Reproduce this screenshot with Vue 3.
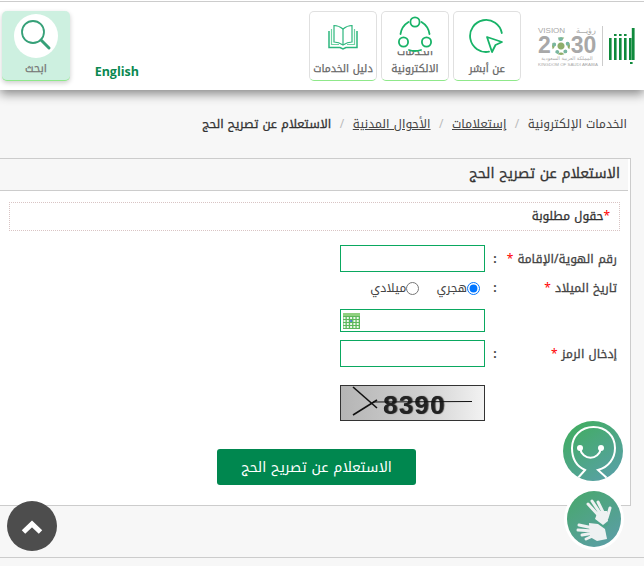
<template>
  <div class="page" dir="rtl">
    <header class="top">
      <div class="logos">
        <svg class="absher" width="30" height="42" viewBox="0 0 30 42">
          <g fill="#0f8a3c">
            <rect x="2" y="13" width="2.6" height="22" />
            <rect x="7" y="13" width="2.6" height="22" />
            <rect x="12" y="13" width="2.6" height="22" />
            <rect x="17" y="13" width="2.6" height="22" />
            <rect x="22" y="13" width="2.6" height="22" />
            <rect x="24.8" y="3" width="2.8" height="32" />
            <rect x="7" y="9" width="2.6" height="2" />
            <rect x="12" y="9" width="2.6" height="2" />
            <rect x="17" y="9" width="2.6" height="2" />
            <rect x="23" y="37" width="2.6" height="2" />
          </g>
        </svg>
        <div class="logo-sep"></div>
        <div class="vision">
          <div class="vision-top"><span>رؤيـــة</span><span dir="ltr">VISION</span></div>
          <div class="vision-year" dir="ltr">2<span class="emblem"></span>30</div>
          <div class="vision-ar">المملكة العربية السعودية</div>
          <div class="vision-en" dir="ltr">KINGDOM OF SAUDI ARABIA</div>
        </div>
      </div>

      <nav class="cards">
        <a class="card">
          <svg class="icon" width="36" height="36" viewBox="0 0 36 36" fill="none" stroke="#18b368" stroke-width="1.8">
            <path d="M20 33.7 A16 16 0 1 1 32.8 15" stroke-linecap="round" />
            <path d="M18 19 L33 24 L26.5 27 L23 34 Z" stroke-linejoin="round" />
          </svg>
          <span>عن أبشر</span>
        </a>
        <a class="card">
          <div class="card-clip">
            <svg width="36" height="40" viewBox="0 0 36 40" fill="none" stroke="#18b368" stroke-width="1.8">
              <circle cx="18" cy="8" r="4.6" />
              <circle cx="6.5" cy="28" r="4.6" />
              <circle cx="29.5" cy="28" r="4.6" />
              <path d="M11.5 8 A17 17 0 0 0 3.5 20" stroke-linecap="round" />
              <path d="M24.5 8 A17 17 0 0 1 32.5 20" stroke-linecap="round" />
              <path d="M12 36 Q18 38 24 36" stroke-linecap="round" />
            </svg>
          </div>
          <span class="two-line">الخدمات الالكترونية</span>
        </a>
        <a class="card">
          <svg class="icon book" width="30" height="26" viewBox="0 0 30 26" fill="none" stroke="#2cb67d" stroke-width="1.2">
            <path d="M15 5 C12 2.5 9 1.5 6 1.5 V18 C9 18 12 19 15 21 C18 19 21 18 24 18 V1.5 C21 1.5 18 2.5 15 5 Z" />
            <path d="M15 5 V21" />
            <path d="M3.5 5 V20.5 H11" stroke="#6fd3a3" />
            <path d="M26.5 5 V20.5 H19" stroke="#6fd3a3" />
            <path d="M1 7 V23.5 H12 L15 25 L18 23.5 H29 V7" stroke-width="1.5" />
          </svg>
          <span>دليل الخدمات</span>
        </a>
      </nav>

      <a class="lang">English</a>

      <a class="search-card">
        <div class="search-circle">
          <svg width="44" height="44" viewBox="0 0 44 44" fill="none" stroke="#36a078">
            <circle cx="19" cy="18" r="11" stroke-width="1.8" />
            <path d="M27 26 L35 34" stroke-width="3" stroke-linecap="round" />
          </svg>
        </div>
        <span>ابحث</span>
      </a>
    </header>

    <div class="crumbs">
      <span>الخدمات الإلكترونية</span>
      <i>/</i>
      <a>إستعلامات</a>
      <i>/</i>
      <a>الأحوال المدنية</a>
      <i>/</i>
      <b>الاستعلام عن تصريح الحج</b>
    </div>

    <section class="panel">
      <h2 class="panel-title">الاستعلام عن تصريح الحج</h2>
      <div class="required"><em>*</em>حقول مطلوبة</div>

      <form class="form" @submit.prevent>
        <div class="row row-id">
          <label>رقم الهوية/الإقامة <em>*</em></label>
          <span class="colon">:</span>
          <input class="field" type="text" />
        </div>

        <div class="row row-radio">
          <label>تاريخ الميلاد <em>*</em></label>
          <span class="colon">:</span>
          <div class="radios">
            <label class="radio"><input type="radio" name="cal" checked />هجري</label>
            <label class="radio"><input type="radio" name="cal" />ميلادي</label>
          </div>
        </div>

        <div class="row row-date">
          <span></span>
          <span></span>
          <div class="field date-field">
            <svg width="17" height="16" viewBox="0 0 17 16">
              <rect width="17" height="16" fill="#5cb85c" />
              <rect x="0" y="0" width="17" height="3" fill="#8fd07f" />
              <g fill="#eef8ea">
                <rect v-for="c in cells" :key="c.k" :x="c.x" :y="c.y" width="2" height="2" />
              </g>
              <rect x="7.1" y="7" width="2" height="2" fill="#4a7fd0" />
            </svg>
          </div>
        </div>

        <div class="row row-code">
          <label>إدخال الرمز <em>*</em></label>
          <span class="colon">:</span>
          <input class="field" type="text" />
        </div>

        <div class="row row-captcha">
          <span></span>
          <span></span>
          <div class="captcha">
            <span class="captcha-text" dir="ltr">8390</span>
            <svg class="captcha-lines" width="143" height="34" viewBox="0 0 143 34" fill="none" stroke="#111">
              <path d="M12 1 L36 22" stroke-width="1.6" />
              <path d="M12 29 L36 14" stroke-width="1.6" />
              <path d="M32 16 L131 15.5" stroke-width="1" />
            </svg>
          </div>
        </div>

        <button class="submit" type="button">الاستعلام عن تصريح الحج</button>
      </form>
    </section>

    <div class="strip"></div>

    <a class="to-top">
      <svg width="24" height="16" viewBox="0 0 24 16" fill="none" stroke="#fff" stroke-width="5">
        <path d="M3.5 14 L12 6 L20.5 14" />
      </svg>
    </a>

    <a class="float-chat">
      <svg width="60" height="60" viewBox="0 0 60 60" fill="none" stroke="#fff" stroke-width="2">
        <path d="M14 58 L22 49 C13 45 9 37 9 27 C9 15 18 6 30.5 6 C43 6 52 15 52 27 C52 37 46 46 35 49 L45 58" />
        <path d="M17 27 C19 40 36 40 38 27" />
        <circle cx="17" cy="27" r="3" fill="#fff" stroke="none" />
        <circle cx="38" cy="27" r="3" fill="#fff" stroke="none" />
      </svg>
    </a>

    <a class="float-sign">
      <svg width="54" height="56" viewBox="0 0 54 56" fill="none" stroke="#eef1f2" stroke-width="3" stroke-linecap="round">
        <path d="M33 26 L21 13 M35 25 L25 10 M38 25 L31 11 M40 27 L43 17" />
        <path d="M31 20 L40 20 L41 30 L36 34 L28 28 Z" fill="#eef1f2" stroke="none" />
        <path d="M24 26 L36 36 L41 33" stroke="#4ea58a" stroke-width="1.5" />
        <path d="M26 37 L12 34 M26 40 L11 39 M27 42 L15 44 M28 44 L19 48" />
        <path d="M22 32 L31 33 L38 38 L40 48 L30 50 L23 46 Z" fill="#eef1f2" stroke="none" />
      </svg>
    </a>
  </div>
</template>

<script setup>
const cells = []
for (let r = 0; r < 4; r++) {
  for (let c = 0; c < 5; c++) {
    cells.push({ k: r + '-' + c, x: 0.5 + c * 3.3, y: 4 + r * 3 })
  }
}
</script>

<style>
html,
body {
  background: #fff;
}
</style>

<style scoped>
.page {
  position: relative;
  width: 644px;
  height: 566px;
  overflow: hidden;
  background: #f7f7f7;
  font-family: "Noto Kufi Arabic", "DejaVu Sans", sans-serif;
  color: #333;
  border-top: 1px solid #fff;
  box-sizing: border-box;
}

.top {
  display: flex;
  align-items: flex-start;
  height: 88px;
  background: #fff;
  border-top: 1px solid #ccc;
  box-shadow: 0 4px 10px rgba(0, 0, 0, 0.45);
}

.logos {
  display: flex;
  align-items: center;
  height: 42px;
  margin: 23px 7px 0 17px;
}

.absher {
  flex: none;
}

.logo-sep {
  width: 1px;
  height: 40px;
  margin: 0 4px 0 6px;
  background: #ccc;
}

.vision {
  width: 58px;
  color: #a8a8a8;
  text-align: center;
  line-height: 1;
}

.vision-top {
  display: flex;
  justify-content: space-between;
  font-size: 8px;
  line-height: 9px;
  height: 9px;
  font-family: "Liberation Sans", sans-serif;
}

.vision-year {
  font-size: 23px;
  line-height: 20px;
  height: 20px;
  font-weight: 700;
  white-space: nowrap;
  font-family: "Liberation Sans", sans-serif;
}

.emblem {
  display: inline-block;
  width: 18px;
  height: 18px;
  margin: 0 1px;
  vertical-align: -2px;
  border-radius: 50%;
  border: 4px dotted #79b7a0;
  background: radial-gradient(circle, #8fae6a 0 3px, #fff 4px);
  box-sizing: border-box;
}

.vision-ar {
  font-size: 5px;
  line-height: 7px;
  height: 7px;
  font-family: "DejaVu Sans", sans-serif;
}

.vision-en {
  font-size: 4.4px;
  line-height: 5px;
  white-space: nowrap;
  font-family: "Liberation Sans", sans-serif;
}

.cards {
  display: flex;
  gap: 4px;
  margin-top: 9px;
}

.card {
  width: 68px;
  height: 70px;
  box-sizing: border-box;
  background: #fff;
  border: 1px solid #e0e0e0;
  border-bottom: 1px solid #8fe88a;
  border-radius: 5px;
  display: flex;
  flex-direction: column;
  align-items: center;
  justify-content: flex-end;
  position: relative;
  padding-bottom: 3px;
  font-size: 10.5px;
  line-height: 17px;
  color: #666;
  -webkit-text-stroke: 0.25px #666;
  white-space: nowrap;
}

.icon {
  position: absolute;
  top: 6px;
  left: 15px;
}

.book {
  top: 12px;
  left: 18px;
}

.card-clip {
  position: absolute;
  top: 0;
  left: 0;
  width: 100%;
  height: 39px;
  display: flex;
  justify-content: center;
  align-items: flex-start;
  background: #fff;
  border-radius: 5px;
  padding-top: 2px;
  box-sizing: border-box;
  z-index: 1;
}

.card-clip svg {
  overflow: visible;
}

.two-line {
  width: 66px;
  white-space: normal;
  text-align: center;
  line-height: 17px;
}

.lang {
  font-family: "Open Sans", sans-serif;
  font-size: 12.5px;
  line-height: 18px;
  font-weight: 700;
  color: #0a8850;
  margin-top: 61px;
  margin-right: 170px;
}

.search-card {
  width: 68px;
  height: 70px;
  box-sizing: border-box;
  margin: 9px auto 0 2px;
  background: #cdf0e0;
  border-bottom: 1px solid #8fe88a;
  border-radius: 5px;
  box-shadow: 0 2px 5px rgba(0, 0, 0, 0.2);
  display: flex;
  flex-direction: column;
  align-items: center;
  padding-top: 3px;
  font-size: 11px;
  line-height: 15px;
  color: #777;
  -webkit-text-stroke: 0.25px #777;
}

.search-circle {
  width: 44px;
  height: 44px;
  border-radius: 50%;
  background: #fff;
  margin-bottom: 3px;
}

.crumbs {
  display: flex;
  align-items: center;
  gap: 8.5px;
  padding: 26px 17px 0 0;
  height: 42px;
  box-sizing: border-box;
  font-size: 12px;
  line-height: 16px;
  color: #444;
  white-space: nowrap;
}

.crumbs a {
  text-decoration: underline;
}

.crumbs i {
  color: #bbb;
  font-style: normal;
}

.crumbs b {
  font-weight: 400;
  -webkit-text-stroke: 0.3px #333;
  color: #333;
}

.panel {
  width: 632px;
  height: 348px;
  margin: 26px 13px 0 0;
  box-sizing: border-box;
  background: #fff;
  border: 1px solid #ccc;
  border-left: none;
}

.panel-title {
  margin: 0 2px 0 0;
  height: 31px;
  line-height: 30px;
  background: #f7f7f7;
  border-bottom: 1px solid #ccc;
  padding-right: 8px;
  font-size: 14px;
  font-weight: 400;
  -webkit-text-stroke: 0.3px #333;
  color: #333;
}

.required {
  margin: 11px 10px 0 10px;
  height: 29px;
  line-height: 27px;
  box-sizing: border-box;
  border: 1px dotted #d9c4c4;
  font-size: 12px;
  -webkit-text-stroke: 0.3px #333;
  padding-right: 9px;
  color: #333;
}

.required em,
.row em {
  color: #f00;
  -webkit-text-stroke: 0;
  font-style: normal;
}

.form {
  padding-top: 14px;
}

.row {
  display: grid;
  grid-template-columns: 112px 20px 145px;
  align-items: center;
  padding-right: 13px;
  font-size: 12px;
  line-height: 20px;
  color: #444;
}

.row > label {
  white-space: nowrap;
  -webkit-text-stroke: 0.3px #444;
}

.colon {
  text-align: center;
  font-weight: 700;
}

.field {
  width: 145px;
  height: 27px;
  box-sizing: border-box;
  border: 1px solid #0aa860;
  border-radius: 0;
  appearance: none;
  background: #fff;
  padding: 0;
  margin: 0;
  outline: none;
  display: block;
}

.row-radio {
  height: 20px;
  margin-top: 6px;
}

.radios {
  display: flex;
  gap: 17px;
  margin-right: -5px;
  padding-right: 10px;
  white-space: nowrap;
  width: 145px;
  box-sizing: border-box;
}

.radio {
  display: flex;
  align-items: center;
  font-size: 12px;
  color: #444;
}

.radio input {
  width: 13px;
  height: 13px;
  margin: 0;
}

.row-date {
  margin-top: 11px;
}

.date-field {
  height: 23px;
  display: flex;
  align-items: center;
  justify-content: flex-end;
  padding-left: 2px;
}

.row-code {
  margin-top: 8px;
}

.row-captcha {
  margin-top: 18px;
}

.captcha {
  position: relative;
  width: 145px;
  height: 36px;
  box-sizing: border-box;
  border: 1px solid #333;
  background: linear-gradient(90deg, #b5b5b5, #cfcfcf 55%, #f2f2f2);
  overflow: hidden;
}

.captcha-text {
  position: absolute;
  left: 42px;
  top: 6px;
  font-family: "Liberation Sans", sans-serif;
  font-size: 26px;
  line-height: 26px;
  font-weight: 700;
  letter-spacing: 1.2px;
  color: #222;
  text-shadow: 1px 0 1px #444;
  filter: blur(0.4px);
}

.captcha-lines {
  position: absolute;
  left: 0;
  top: 0;
}

.submit {
  display: block;
  width: 199px;
  height: 36px;
  margin: 28px 214px 0 0;
  padding: 0;
  border: none;
  border-radius: 3px;
  background: #00874f;
  color: #fff;
  font-family: inherit;
  font-size: 14px;
}

.strip {
  height: 51px;
  border-bottom: 1px solid #ccc;
}

.to-top {
  position: absolute;
  left: 7px;
  top: 500px;
  width: 50px;
  height: 50px;
  border-radius: 50%;
  background: #4d4d4d;
  display: flex;
  align-items: center;
  justify-content: center;
}

.float-chat {
  position: absolute;
  left: 563px;
  top: 420px;
  width: 60px;
  height: 60px;
  border-radius: 50%;
  overflow: hidden;
  background: linear-gradient(145deg, #3fae5a, #5b9fae);
}

.float-sign {
  position: absolute;
  left: 567px;
  top: 490px;
  width: 54px;
  height: 56px;
  border-radius: 50%;
  background: linear-gradient(145deg, #47a86a, #5d9dab);
  box-shadow: 0 0 0 3px #fff;
}
</style>
